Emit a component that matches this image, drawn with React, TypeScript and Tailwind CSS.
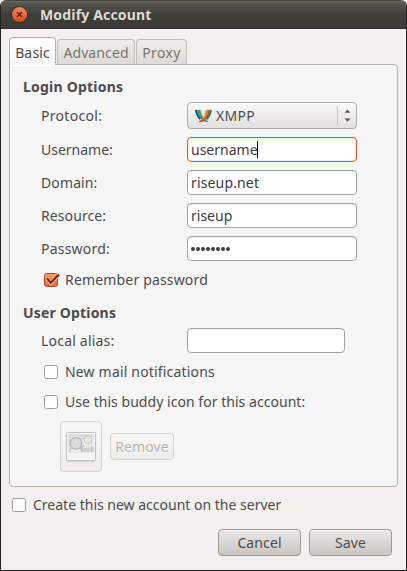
import type { ReactNode } from "react";

function Check({ checked = false }: { checked?: boolean }) {
  return (
    <span
      className={
        "relative block size-3.5 shrink-0 rounded-[2.5px] border " +
        (checked
          ? "border-[#a44c31] bg-linear-to-b from-[#f59b78] to-[#e9683c]"
          : "border-[#a29c97] bg-white")
      }
    >
      {checked && (
        <svg className="absolute -left-px -top-px" width="17" height="14" viewBox="0 0 17 14" fill="none">
          <path d="M3.6 6.2 L6.7 10.2 L14.6 2" stroke="#f8b497" strokeWidth="3.6" />
          <path d="M3.2 5.6 L6.7 9.8 L15 1.6" stroke="#5b3429" strokeWidth="2.1" />
        </svg>
      )}
    </span>
  );
}

function Field({ label, children }: { label: ReactNode; children: ReactNode }) {
  return (
    <div className="flex h-[25px] items-center">
      <div className="w-[146px] shrink-0">{label}</div>
      {children}
    </div>
  );
}

const entry =
  "flex h-[25px] items-center rounded-[4px] border border-[#a8a29d] bg-white pl-[3px] text-[#3c3c3c] shadow-[inset_0_1px_0_#f3f2f1]";

function ProtocolLogo() {
  return (
    <svg width="17" height="14" viewBox="0 0 17 14" className="shrink-0" fill="none">
      <path d="M1 0.8 C1.4 4.5 2.8 7.6 5.4 10" stroke="#1c4a6e" strokeWidth="1.9" />
      <path d="M2.8 0.8 C3.2 5.2 5 8.8 9 11.4 L12.6 12.8" stroke="#1f8fa3" strokeWidth="1.7" />
      <path d="M4.5 0.8 C4.9 5 6.6 8.2 10.2 10.8" stroke="#3f9c49" strokeWidth="1.7" />
      <path d="M6 1.4 C6.2 4.8 7.4 7.6 9.4 9.4" stroke="#b8cc4d" strokeWidth="1" />
      <path d="M15.9 0.8 C15.5 4.5 14.2 7.6 11.4 10.4" stroke="#23806b" strokeWidth="1.9" />
      <path d="M14.2 0.8 C13.8 5.2 12 8.8 8 11.4 L4.2 12.8" stroke="#c9432b" strokeWidth="1.7" />
      <path d="M12.5 0.8 C12.2 5 10.6 8.2 7.4 10.8" stroke="#ea6a33" strokeWidth="1.8" />
      <path d="M10.8 1.4 C10.7 4.8 9.8 7.4 8 9.4" stroke="#f2a560" strokeWidth="1.2" />
    </svg>
  );
}

function PictureIcon() {
  return (
    <svg width="32" height="34" viewBox="0 0 32 34" fill="none">
      <path d="M2 31.5H30" stroke="#deddda" strokeWidth="2" />
      <rect x="1.5" y="2.5" width="29" height="28" rx="1" fill="#f4f4f3" stroke="#bdbdbb" />
      <rect x="3" y="4" width="26" height="18.5" fill="#dededc" />
      <path d="M3 22.5 V17 L29 6 V22.5Z" fill="#e9e9e8" />
      <path d="M17 18 L29 16.5 V22H16Z" fill="#d0d0ce" />
      <path d="M4.5 22 C4.5 19 6.5 17.5 8 17.5 M14 17.5 C16 18 17 20 17 22 M15 19 L19 15.5" stroke="#bcbcba" strokeWidth="1.3" />
      <circle cx="11" cy="13.3" r="5.8" fill="#dbdbd9" stroke="#b5b5b2" strokeWidth="1.2" />
      <circle cx="23" cy="9.5" r="3.8" fill="#e8e8e0" stroke="#c4c4b8" />
      <rect x="2.5" y="3.5" width="27" height="26" stroke="#fafafa" />
    </svg>
  );
}

export default function App() {
  return (
    <div className="h-[571px] w-[407px] bg-white">
      <div className="flex h-full flex-col overflow-hidden rounded-t-[6px] border-x border-b border-[#242220] bg-[#f2f1f0] font-['Noto_Sans','Open_Sans',sans-serif] text-[14px] leading-[18px] whitespace-nowrap text-[#4c4c4c]">
        <header className="flex h-[29px] shrink-0 items-center border-t border-b border-t-[#45443f] border-b-[#33322e] bg-linear-to-b from-[#5d5b53] via-[#3f3e39] via-50% to-[#3b3a36] pl-[11px] shadow-[inset_0_1px_0_#6b6962]">
          <span className="flex size-[15px] items-center justify-center rounded-full bg-linear-to-b from-[#f58763] to-[#df4a12] shadow-[0_0_0_1px_#34312d]">
            <svg width="7" height="7" viewBox="0 0 7 7">
              <path d="M1 1L6 6M6 1L1 6" stroke="#48261a" strokeWidth="1.4" />
            </svg>
          </span>
          <h1 className="ml-[13px] font-bold tracking-[0.16px] text-[#dfdbd2]">Modify Account</h1>
        </header>

        <main className="flex flex-col px-2 pt-2">
          <nav className="z-10 -mb-px flex h-7 items-end">
            <div className="flex h-7 w-[47px] items-center justify-center rounded-t-[4px] border border-b-0 border-[#b5b0aa] bg-linear-to-b from-white to-[#f6f6f6] pt-[2px] tracking-[0.15px]">
              Basic
            </div>
            <div className="mb-px ml-px flex h-[25px] w-[78px] items-center justify-center rounded-t-[4px] border border-b-0 border-[#c1bdb9] bg-linear-to-b from-[#eeedeb] to-[#dedad7] pt-[2px] tracking-[0.1px] text-[#78756f]">
              Advanced
            </div>
            <div className="mb-px ml-px flex h-[25px] w-[51px] items-center justify-center rounded-t-[4px] border border-b-0 border-[#c1bdb9] bg-linear-to-b from-[#eeedeb] to-[#dedad7] pt-[2px] tracking-[0.4px] text-[#78756f]">
              Proxy
            </div>
          </nav>

          <section className="flex h-[423px] w-[389px] flex-col rounded-[4px] rounded-tl-none border border-[#b5b0aa] bg-[#f6f6f6] pl-[13px] shadow-[inset_1px_1px_0_#fff]">
            <h2 className="mt-[13px] font-bold tracking-[0.22px]">Login Options</h2>
            <div className="mt-[6px] ml-[18px] flex h-[27px] items-center">
              <div className="w-[146px] tracking-[0.3px]">Protocol:</div>
              <div className="flex h-[27px] w-[170px] items-center rounded-[4px] border border-[#b0aca7] bg-linear-to-b from-[#fafafa] to-[#e2e0de] pl-[7px] shadow-[inset_0_1px_0_#fff]">
                <ProtocolLogo />
                <span className="ml-[4px] w-[121px] tracking-[0.3px]">XMPP</span>
                <span className="h-[19px] w-px bg-[#c2bfbc]" />
                <svg className="ml-[6px]" width="7" height="13" viewBox="0 0 7 13" fill="#595855">
                  <path d="M0.5 3.7L3.5 0.5L6.5 3.7ZM0.5 9.5L3.5 12.7L6.5 9.5Z" />
                </svg>
              </div>
            </div>
            <div className="mt-2 ml-[18px] flex flex-col gap-2">
              <Field label="Username:">
                <div className="flex h-[25px] w-[170px] items-center rounded-[4px] border border-[#d95a30] bg-white pl-[3px] text-[#3c3c3c] shadow-[inset_0_0_0_1px_#fae8e1]">
                  <span className="-mr-px">username</span>
                  <span className="h-[17px] w-px bg-black" />
                </div>
              </Field>
              <Field label={<span className="tracking-[0.12px]">Domain:</span>}>
                <div className={entry + " w-[170px] tracking-[0.15px]"}>riseup.net</div>
              </Field>
              <Field label={<span className="tracking-[0.1px]">Resource:</span>}>
                <div className={entry + " w-[170px]"}>riseup</div>
              </Field>
              <Field label={<span className="tracking-[0.22px]">Password:</span>}>
                <div className={entry + " w-[170px] gap-px"}>
                  {Array.from({ length: 8 }, (_, i) => (
                    <span key={i} className="mt-px size-1 rounded-full bg-[#3c3c3c]" />
                  ))}
                </div>
              </Field>
            </div>
            <div className="mt-[10px] ml-[21px] flex h-[18px] items-center gap-[7px]">
              <Check checked />
              <span className="tracking-[0.17px]">Remember password</span>
            </div>
            <h2 className="mt-[15px] font-bold tracking-[0.18px]">User Options</h2>
            <div className="mt-[6px] ml-[18px]">
              <Field label={<span className="tracking-[0.2px]">Local alias:</span>}>
                <div className={entry + " w-[158px]"} />
              </Field>
            </div>
            <div className="mt-[10px] ml-[21px] flex h-[18px] items-center gap-[7px]">
              <Check />
              <span className="tracking-[0.18px]">New mail notifications</span>
            </div>
            <div className="mt-3 ml-[21px] flex h-[18px] items-center gap-[7px]">
              <Check />
              <span className="tracking-[0.04px]">Use this buddy icon for this account:</span>
            </div>
            <div className="mt-[10px] ml-[37px] flex h-[51px] items-center gap-2">
              <div className="flex h-[51px] w-[42px] items-center justify-center rounded-[4px] border border-[#d3d0cd] bg-linear-to-b from-[#f8f8f7] to-[#edecea]">
                <PictureIcon />
              </div>
              <div className="flex h-[27px] w-[64px] items-center justify-center rounded-[4px] border border-[#d3d0cd] bg-linear-to-b from-[#f8f8f7] to-[#edecea] tracking-[0.12px] text-[#b5b2af] [text-shadow:0_1px_0_white]">
                Remove
              </div>
            </div>
          </section>

          <div className="mt-[9px] ml-[3px] flex h-[18px] items-center gap-[7px]">
            <Check />
            <span>Create this new account on the server</span>
          </div>
          <div className="mt-[15px] mr-[6px] flex justify-end gap-2">
            {["Cancel", "Save"].map((name) => (
              <div
                key={name}
                className="flex h-[27px] w-[83px] items-center justify-center rounded-[4px] border border-[#9f9994] bg-linear-to-b from-[#e9e7e5] to-[#cbc6c2] tracking-[0.1px] shadow-[inset_0_1px_0_#f3f2f1]"
              >
                {name}
              </div>
            ))}
          </div>
        </main>
      </div>
    </div>
  );
}
